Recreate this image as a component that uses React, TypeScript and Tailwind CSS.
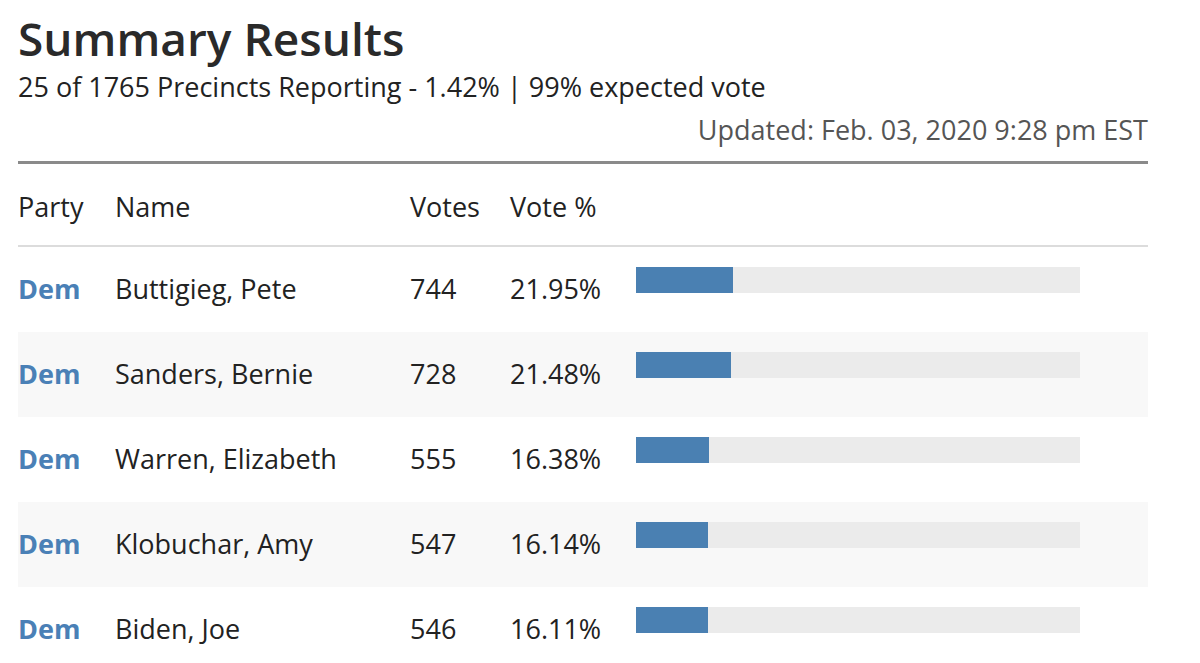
const candidates = [
  { party: "Dem", name: "Buttigieg, Pete", votes: 744, pct: 21.95 },
  { party: "Dem", name: "Sanders, Bernie", votes: 728, pct: 21.48 },
  { party: "Dem", name: "Warren, Elizabeth", votes: 555, pct: 16.38 },
  { party: "Dem", name: "Klobuchar, Amy", votes: 547, pct: 16.14 },
  { party: "Dem", name: "Biden, Joe", votes: 546, pct: 16.11 },
]

export default function App() {
  return (
    <div
      className="w-[1200px] h-[663px] overflow-hidden bg-white pl-[18px] pr-[52px] text-[#222]"
      style={{ fontFamily: '"Open Sans", "Noto Sans", sans-serif' }}
    >
      {/* Header */}
      <h1 className="pt-[6px] text-[46px] leading-[64px] font-semibold text-[#2a2a2a]">Summary Results</h1>
      <div className="mt-[2px] text-[27px] leading-[30px] text-[#222]">
        25 of 1765 Precincts Reporting - 1.42% | 99% expected vote
      </div>
      <div className="text-right text-[27px] leading-[30px] text-[#555] mt-[13px]">
        Updated: Feb. 03, 2020 9:28 pm EST
      </div>
      <div className="h-[3px] bg-[#8a8a8a] mt-[16px]" />

      {/* Table */}
      <div className="grid grid-cols-[97px_295px_100px_126px_444px_1fr] items-center h-[83px] pt-[5px] border-b-2 border-[#dcdcdc] text-[27px]">
        <div>Party</div>
        <div>Name</div>
        <div>Votes</div>
        <div>Vote %</div>
        <div />
        <div />
      </div>
      {candidates.map((c, i) => (
        <div
          key={c.name}
          className={`grid grid-cols-[97px_295px_100px_126px_444px_1fr] items-center h-[85px] text-[27px] ${i % 2 === 1 ? "bg-[#f8f8f8]" : ""}`}
        >
          <div className="font-bold text-[#4a80b6]">{c.party}</div>
          <div>{c.name}</div>
          <div>{c.votes}</div>
          <div>{c.pct.toFixed(2)}%</div>
          <div className="h-[26px] bg-[#ebebeb] mb-[19px]">
            <div className="h-full bg-[#4a80b2]" style={{ width: `${c.pct}%` }} />
          </div>
          <div />
        </div>
      ))}
    </div>
  )
}
